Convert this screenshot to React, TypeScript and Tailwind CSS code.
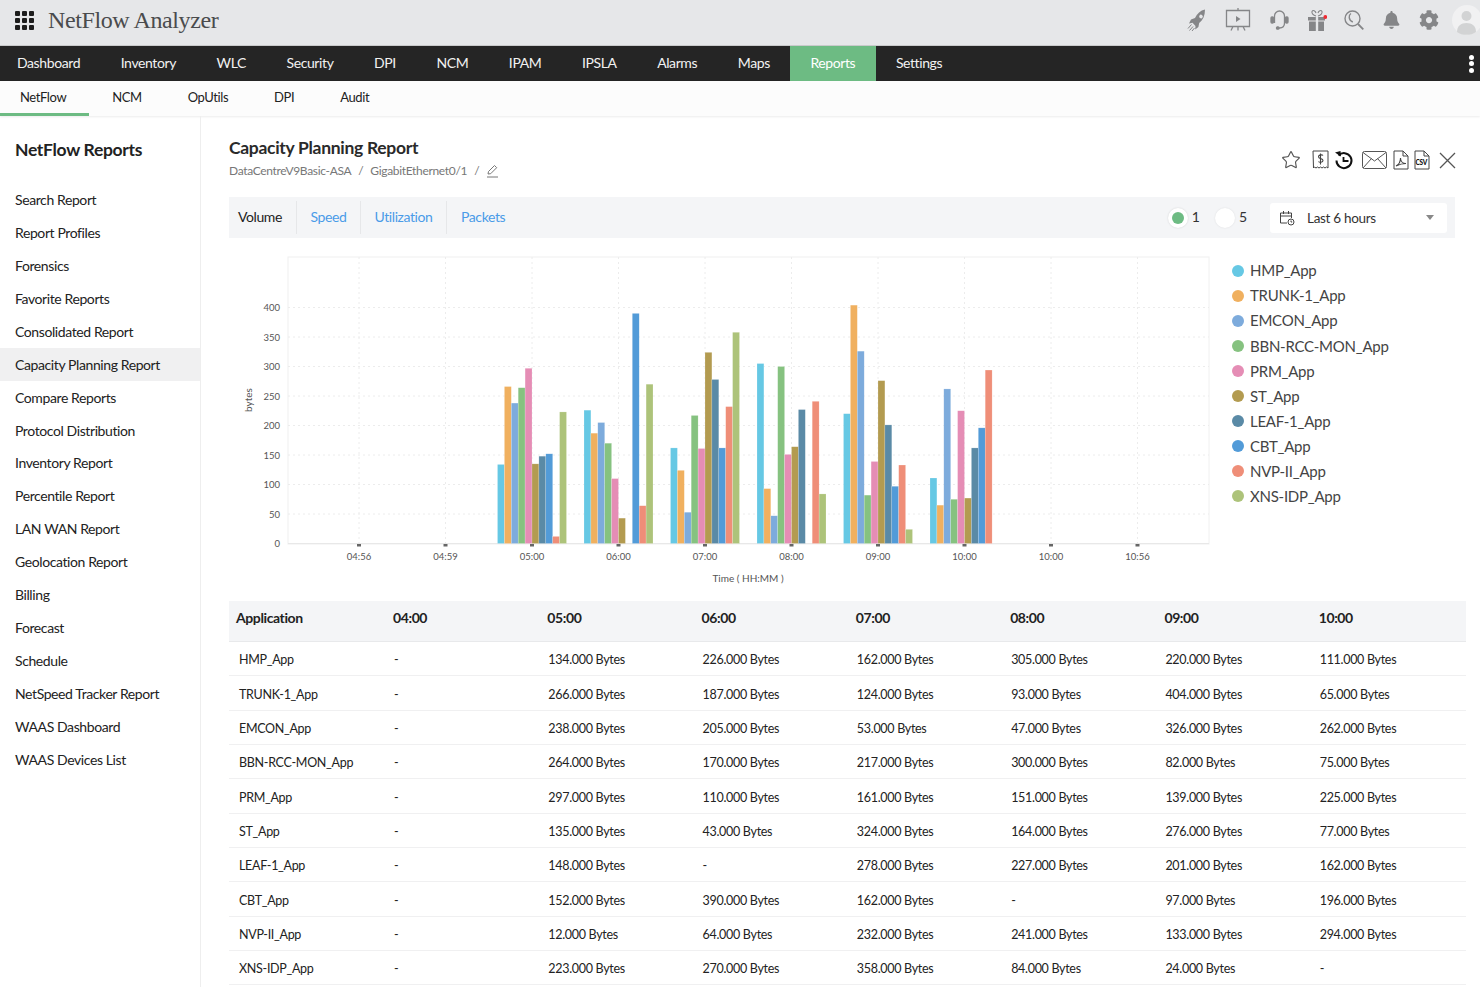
import { Star } from 'lucide-react';
import { FaBell, FaCog } from 'react-icons/fa';

const FONT = "font-['Lato','Noto_Sans',sans-serif]";

const navItems = ['Dashboard', 'Inventory', 'WLC', 'Security', 'DPI', 'NCM', 'IPAM', 'IPSLA', 'Alarms', 'Maps', 'Reports', 'Settings'];
const subItems = ['NetFlow', 'NCM', 'OpUtils', 'DPI', 'Audit'];
const sideItems = [
  'Search Report', 'Report Profiles', 'Forensics', 'Favorite Reports', 'Consolidated Report', 'Capacity Planning Report',
  'Compare Reports', 'Protocol Distribution', 'Inventory Report', 'Percentile Report', 'LAN WAN Report', 'Geolocation Report',
  'Billing', 'Forecast', 'Schedule', 'NetSpeed Tracker Report', 'WAAS Dashboard', 'WAAS Devices List',
];

const times = ['04:00', '05:00', '06:00', '07:00', '08:00', '09:00', '10:00'];

// one row per application, values by hour; null shows as "-"
const apps: { name: string; color: string; values: (number | null)[] }[] = [
  { name: 'HMP_App', color: '#66c8e4', values: [null, 134, 226, 162, 305, 220, 111] },
  { name: 'TRUNK-1_App', color: '#f0b05f', values: [null, 266, 187, 124, 93, 404, 65] },
  { name: 'EMCON_App', color: '#7dabdc', values: [null, 238, 205, 53, 47, 326, 262] },
  { name: 'BBN-RCC-MON_App', color: '#86c280', values: [null, 264, 170, 217, 300, 82, 75] },
  { name: 'PRM_App', color: '#e58db5', values: [null, 297, 110, 161, 151, 139, 225] },
  { name: 'ST_App', color: '#b39b50', values: [null, 135, 43, 324, 164, 276, 77] },
  { name: 'LEAF-1_App', color: '#5a8aa6', values: [null, 148, null, 278, 227, 201, 162] },
  { name: 'CBT_App', color: '#529bd8', values: [null, 152, 390, 162, null, 97, 196] },
  { name: 'NVP-II_App', color: '#ef8e78', values: [null, 12, 64, 232, 241, 133, 294] },
  { name: 'XNS-IDP_App', color: '#adc37a', values: [null, 223, 270, 358, 84, 24, null] },
];

const ticks = [
  { x: 359, label: '04:56' },
  { x: 445.5, label: '04:59' },
  { x: 532, label: '05:00' },
  { x: 618.5, label: '06:00' },
  { x: 705, label: '07:00' },
  { x: 791.5, label: '08:00' },
  { x: 878, label: '09:00' },
  { x: 964.5, label: '10:00' },
  { x: 1051, label: '10:00' },
  { x: 1137.5, label: '10:56' },
];

function Chart() {
  const ox = 229;
  const oy = 245;
  const base = 543.5 - oy;
  const scale = 0.59;
  const barW = 6.9;
  return (
    <svg width="1000" height="345" viewBox="0 0 1000 345" className="block">
      <rect x={288 - ox} y={257 - oy} width={921} height={287} fill="none" stroke="#f0f0f0" />
      {[50, 100, 150, 200, 250, 300, 350, 400].map((v) => (
        <line key={v} x1={288 - ox} x2={1209 - ox} y1={base - v * scale} y2={base - v * scale} stroke="#ececec" strokeDasharray="2 3" />
      ))}
      {ticks.map((t) => (
        <line key={t.x} x1={t.x - ox} x2={t.x - ox} y1={257 - oy} y2={base} stroke="#ececec" strokeDasharray="2 3" />
      ))}
      <line x1={288 - ox} x2={1209 - ox} y1={base} y2={base} stroke="#e8e8e8" />
      {[0, 50, 100, 150, 200, 250, 300, 350, 400].map((v) => (
        <text key={v} x={280 - ox} y={base - v * scale + 3.5} textAnchor="end" fontSize="9.5" fill="#555">
          {v}
        </text>
      ))}
      <text transform={`translate(${252 - ox} ${400 - oy}) rotate(-90)`} textAnchor="middle" fontSize="10" fill="#555">
        bytes
      </text>
      {times.slice(1).map((_, hour) =>
        apps.map((app, i) => {
          const v = app.values[hour + 1];
          if (v === null) return null;
          const left = ticks[hour + 2].x - ox - 34.5 + i * barW;
          return <rect key={app.name + hour} x={left} y={base - v * scale} width={barW} height={v * scale} fill={app.color} stroke="#fff" strokeOpacity="0.35" strokeWidth="0.5" />;
        }),
      )}
      {ticks.map((t) => (
        <g key={t.x}>
          <rect x={t.x - ox - 2} y={base + 0.5} width={4} height={2.5} fill="#666" />
          <text x={t.x - ox} y={559.5 - oy} textAnchor="middle" fontSize="9.5" fill="#555">
            {t.label}
          </text>
        </g>
      ))}
      <text x={748 - ox} y={581.5 - oy} textAnchor="middle" fontSize="10" fill="#555">
        Time ( HH:MM )
      </text>
    </svg>
  );
}

function HeaderIcons() {
  return (
    <div className="flex items-center text-[#858688]">
      <svg width="19" height="23" viewBox="0 0 19 23" className="ml-0">
        <path fill="currentColor" fillRule="evenodd" d="M18 .5c-4.500 1-8 4-10 8.500l-4 1.500-2 4 3.500-.8 3 3.300-.3 3.500 3.200-2.500.8-4c3.800-3 5.800-7.500 5.800-13.500zM12.500 6.500a1.800 1.800 0 1 0 3 2 1.800 1.800 0 0 0-3-2z" />
        <path fill="none" stroke="currentColor" strokeWidth="1" d="M4.500 15.500L1 19.500M6 17.500L2.500 21.500M7.500 19L5 22" />
      </svg>
      <svg width="26" height="26" viewBox="0 0 26 26" fill="none" stroke="currentColor" strokeWidth="1.3" className="ml-[19px]">
        <path d="M13 1v2.500M1.500 3.500h23v16h-23zM8 19.500l-2 4M18 19.500l2 4M13 19.500v4" />
        <path d="M11 9l4.500 3-4.500 3z" fill="currentColor" stroke="none" />
      </svg>
      <svg width="19" height="24" viewBox="0 0 19 24" fill="none" stroke="currentColor" strokeWidth="1.300" className="ml-[19px]">
        <path d="M4.500 15V8a5 5 0 0 1 10 0v7c0 3-2 5-5 5H8" />
        <rect x="1" y="9" width="2.500" height="6" rx="1" fill="currentColor" />
        <rect x="15.500" y="9" width="2.500" height="6" rx="1" fill="currentColor" />
        <rect x="6.500" y="18.800" width="2.500" height="2.400" rx="1" fill="currentColor" />
      </svg>
      <svg width="20" height="22" viewBox="0 0 20 22" className="ml-[18px]">
        <path fill="none" stroke="currentColor" strokeWidth="1.100" d="M9 7C6 6.500 4.500 4 5 2.500 6 .5 8.500 2 9 4M11 7c3-.5 4.500-3 4-4.500-1-2-3.500-.5-4 1.500" />
        <path fill="currentColor" d="M1 8h7.800v3.500H1zM11.200 8H18v3.500h-6.800zM2 12.500h6.800V22H2zM11.200 12.500H17V22h-5.800z" />
        <circle cx="18.300" cy="8" r="1.900" fill="#ee2b33" />
      </svg>
      <svg width="20" height="20" viewBox="0 0 20 20" fill="none" stroke="currentColor" strokeWidth="1.400" className="ml-[17px]">
        <circle cx="8.500" cy="8.500" r="7.500" />
        <path d="M14 14l5.300 5.300" strokeWidth="1.800" />
        <path d="M7 3.500c-2.500 1.500-2.800 6.500 1.800 8.500" />
      </svg>
      <FaBell className="ml-[19px] h-[18px] w-[17px]" />
      <FaCog className="ml-[19px] h-[20px] w-[20px]" />
      <svg width="28" height="30" viewBox="0 0 28 30" className="ml-[13px]">
        <circle cx="15" cy="15" r="15" fill="#f1f1f2" />
        <circle cx="14.500" cy="11" r="5" fill="#d2d3d4" />
        <path fill="#d2d3d4" d="M5 27c0-6 4-9 9.500-9S24 21 24 27c-2.500 2-6 2.800-9.500 2.800S7.500 29 5 27z" />
      </svg>
    </div>
  );
}

function ReportIcons() {
  return (
    <div className="flex items-center text-[#333]">
      <Star className="h-[20px] w-[20px] text-[#555]" strokeWidth={1.4} />
      <svg width="17" height="20" viewBox="0 0 17 20" fill="none" stroke="#444" strokeWidth="1" className="ml-[11px]">
        <path d="M1 1h15v17l-1.500-1-1.500 1-1.500-1-1.500 1-1.500-1-1.500 1-1.500-1-1.500 1-1.500-1-1 1z" />
        <path d="M11 5.500c-.8-1-4.500-1-4.500 1.300 0 2.400 4.500 1.200 4.500 3.600 0 2.200-3.700 2.200-4.500 1.100M8.500 3.500v11" strokeWidth="1.100" />
      </svg>
      <svg width="20" height="20" viewBox="0 0 20 20" fill="none" stroke="#111" strokeWidth="2" className="ml-[5px]">
        <path d="M4.500 5.500a7.500 7.500 0 1 1-2 5" />
        <path d="M1 2.500l5.500-1.500.5 5.500z" fill="#111" stroke="none" />
        <path d="M9.500 7v4h5" strokeWidth="1.800" />
      </svg>
      <svg width="25" height="18" viewBox="0 0 25 18" fill="none" stroke="#555" strokeWidth="1" className="ml-[8px]">
        <rect x="0.500" y="0.500" width="24" height="17" rx="2" />
        <path d="M1 1.500l11.500 8.500L24 1.500M1 17l8.500-9.500M24 17l-8.500-9.500" />
      </svg>
      <svg width="16" height="20" viewBox="0 0 16 20" fill="none" stroke="#444" strokeWidth="1" className="ml-[6px]">
        <path d="M1 1h9l5 5v13H1zM10 1v5h5" />
        <path d="M3 16c3-1.500 4.500-5 4.500-8 0 3 2 5.500 5.500 5.500-3.500 0-7 1-10 2.500z" strokeWidth="1.100" />
      </svg>
      <div className="relative ml-[5px] h-[20px] w-[16px]">
        <svg width="16" height="20" viewBox="0 0 16 20" fill="none" stroke="#444" strokeWidth="1">
          <path d="M1 1h9l5 5v13H1zM10 1v5h5" />
        </svg>
        <span className="absolute left-[1.500px] top-[9px] text-[6.500px] font-black uppercase leading-[8px] tracking-[-0.2px] text-[#111]">csv</span>
      </div>
      <svg width="17" height="17" viewBox="0 0 17 17" fill="none" stroke="#555" strokeWidth="1.300" className="ml-[9px]">
        <path d="M1 1l15 15M16 1L1 16" />
      </svg>
    </div>
  );
}

export default function App() {
  return (
    <div className={`${FONT} h-[987px] w-[1480px] overflow-hidden bg-white text-[#222]`}>
      <header className="flex h-[46px] items-center justify-between border-b border-[#c9cacb] bg-[#e6e7e9] pb-[5px]">
        <div className="flex items-center">
          <div className="ml-[15px] grid grid-cols-3 gap-[2px]">
            {Array.from({ length: 9 }).map((_, i) => (
              <span key={i} className="h-[5px] w-[5px] rounded-[1px] bg-[#1d1d1d]" />
            ))}
          </div>
          <span className="ml-[14px] font-['Liberation_Serif',serif] text-[24px] leading-none tracking-[-0.4px] text-[#4a4b4d]">NetFlow Analyzer</span>
        </div>
        <HeaderIcons />
      </header>

      <nav className="flex h-[35px] items-center justify-between bg-[#252525] text-[14px] tracking-[-0.4px] text-[#f2f2f2]">
        <div className="ml-[-3.300px] flex h-full items-center">
          {navItems.map((item) => (
            <div key={item} className={`flex h-full items-center px-[20.300px] pb-[2px] ${item === 'Reports' ? 'bg-[#6dbb83] text-white' : ''}`}>
              {item}
            </div>
          ))}
        </div>
        <div className="mr-[6px] flex flex-col gap-[1.500px]">
          <span className="h-[5px] w-[5px] rounded-full bg-white" />
          <span className="h-[5px] w-[5px] rounded-full bg-white" />
          <span className="h-[5px] w-[5px] rounded-full bg-white" />
        </div>
      </nav>

      <div className="flex h-[35px] items-stretch bg-[#fcfcfc] text-[13px] tracking-[-0.4px] text-[#222] shadow-[0_1px_2px_rgba(0,0,0,0.08)]">
        {subItems.map((item, i) => (
          <div key={item} className={`flex items-center pb-[1px] ${i === 0 ? 'border-b-[3px] border-[#6dbb83] pl-[20px] pr-[23px] pt-[2px]' : 'px-[23px]'}`}>
            {item}
          </div>
        ))}
      </div>

      <div className="flex">
        <aside className="h-[871px] w-[201px] shrink-0 border-r border-[#eeeeee] pt-[21px]">
          <h2 className="pl-[15px] text-[17.500px] font-bold leading-[26px] tracking-[-0.3px] text-[#222]">NetFlow Reports</h2>
          <ul className="mt-[20px]">
            {sideItems.map((item) => (
              <li key={item} className={`flex h-[32.950px] items-center pl-[15px] text-[14px] tracking-[-0.4px] ${item === 'Capacity Planning Report' ? 'bg-[#f0f0f1]' : ''}`}>
                {item}
              </li>
            ))}
          </ul>
        </aside>

        <main className="min-w-0 flex-1 pl-[28px] pr-[14px]">
          <div className="flex h-[81px] items-start justify-between pr-[10px] pt-[20px]">
            <div>
              <h1 className="text-[17.500px] font-bold leading-[24px] tracking-[-0.3px] text-[#2a2a2a]">Capacity Planning Report</h1>
              <div className="mt-[2px] flex items-center text-[12px] leading-[18px] tracking-[-0.33px] text-[#777]">
                <span>DataCentreV9Basic-ASA</span>
                <span className="mx-[7px]">/</span>
                <span>GigabitEthernet0/1</span>
                <span className="mx-[7px]">/</span>
                <svg width="13" height="14" viewBox="0 0 13 14" fill="none" stroke="#777" strokeWidth="1">
                  <path d="M2 10l.500-2.500L8.500 1.500l2.200 2.200-6 6zM1 13h11" />
                </svg>
              </div>
            </div>
            <div className="mt-[14px]">
              <ReportIcons />
            </div>
          </div>

          <div className="mr-[11px] flex h-[41px] items-center justify-between bg-[#f4f5f7] text-[14px]">
            <div className="flex h-[33px] items-center tracking-[-0.4px]">
              <div className="flex h-full items-center border-r border-[#e6e7e9] pb-[2px] pl-[9px] pr-[14px] text-[#222]">Volume</div>
              <div className="flex h-full items-center border-r border-[#e6e7e9] px-[13.500px] pb-[2px] text-[#4a9be8]">Speed</div>
              <div className="flex h-full items-center border-r border-[#e6e7e9] px-[13.500px] pb-[2px] text-[#4a9be8]">Utilization</div>
              <div className="flex h-full items-center px-[14px] pb-[2px] text-[#4a9be8]">Packets</div>
            </div>
            <div className="flex items-center pr-[8px]">
              <span className="flex h-[20px] w-[20px] items-center justify-center rounded-full bg-white shadow-[0_0_2px_rgba(0,0,0,0.15)]">
                <span className="h-[12px] w-[12px] rounded-full bg-[#6dbb83]" />
              </span>
              <span className="ml-[4px] pb-[2px] text-[14px] text-[#333]">1</span>
              <span className="ml-[15px] h-[20px] w-[20px] rounded-full bg-white shadow-[0_0_2px_rgba(0,0,0,0.1)]" />
              <span className="ml-[4px] pb-[2px] text-[14px] text-[#333]">5</span>
              <div className="ml-[23px] flex h-[30px] w-[177px] items-center rounded-[3px] bg-white pl-[9px] pr-[13px] text-[13.500px] tracking-[-0.3px] text-[#333]">
                <svg width="16" height="16" viewBox="0 0 16 16" fill="none" stroke="#444" strokeWidth="1">
                  <path d="M8 13H1.500V3h11v5M1.500 6h11M4.500 1v3M9.500 1v3" />
                  <circle cx="12" cy="12" r="3" />
                  <path d="M12 10.500V12h1.200" />
                </svg>
                <span className="ml-[12px] flex-1 pt-[1px]">Last 6 hours</span>
                <span className="h-0 w-0 border-x-[4px] border-t-[5px] border-x-transparent border-t-[#888]" />
              </div>
            </div>
          </div>

          <div className="flex h-[363px] items-start pt-[7px]">
            <div className="w-[1003px] shrink-0">
              <Chart />
            </div>
            <ul className="mt-[13px]">
              {apps.map((app) => (
                <li key={app.name} className="flex h-[25.100px] items-center text-[15px] tracking-[-0.25px] text-[#444]">
                  <span className="mr-[6px] h-[12px] w-[12px] rounded-full" style={{ backgroundColor: app.color }} />
                  {app.name}
                </li>
              ))}
            </ul>
          </div>

          <div className="grid w-[1237px] grid-cols-[157px_repeat(7,1fr)] text-[12.500px] tracking-[-0.3px] text-[#222]">
            <div className="flex h-[41px] items-center border-b border-[#e8e9eb] bg-[#f4f5f7] pb-[8px] pl-[7px] text-[14px] font-bold tracking-[-0.4px]">Application</div>
            {times.map((t) => (
              <div key={t} className="flex h-[41px] items-center border-b border-[#e8e9eb] bg-[#f4f5f7] pb-[8px] pl-[7px] text-[14px] font-bold tracking-[-0.4px]">
                {t}
              </div>
            ))}
            {apps.map((app) => (
              <div key={app.name} className="contents">
                <div className="flex h-[34.330px] items-center border-b border-[#f0f0f1] pl-[10px] pt-[4px]">{app.name}</div>
                {app.values.map((v, i) => (
                  <div key={i} className="flex h-[34.330px] items-center border-b border-[#f0f0f1] pl-[8px] pt-[4px]">
                    {v === null ? '-' : `${v}.000 Bytes`}
                  </div>
                ))}
              </div>
            ))}
          </div>
        </main>
      </div>
    </div>
  );
}
